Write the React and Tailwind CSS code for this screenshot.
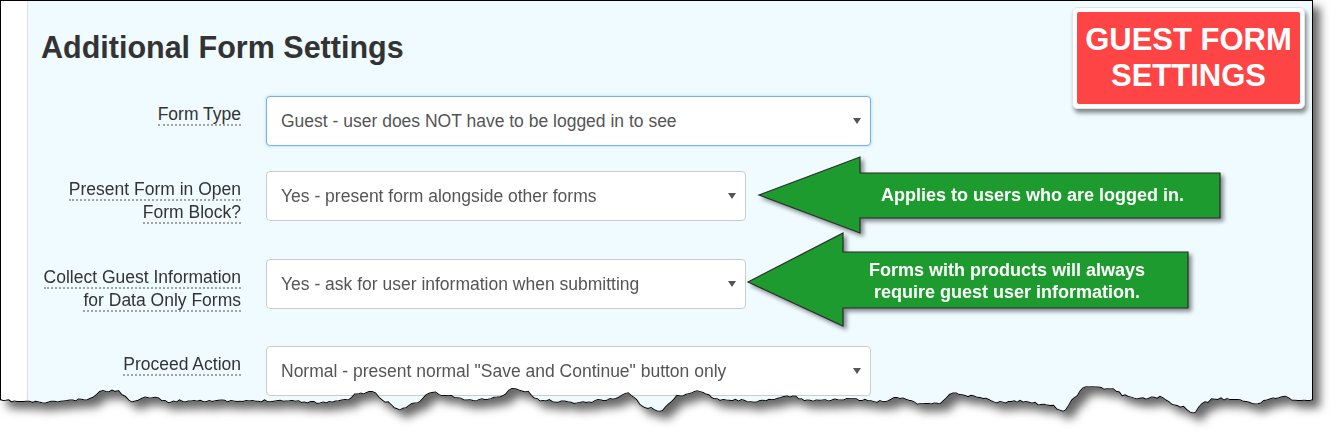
import React from 'react';

// rough outline of the torn bottom edge (x, y) in page pixels
const tearControl = [
  [0, 401], [20, 402], [45, 403], [70, 401], [90, 400], [100, 392], [115, 391], [125, 396],
  [132, 403], [145, 397], [155, 398], [165, 402], [200, 401], [240, 402], [280, 401], [320, 403],
  [345, 401], [358, 394], [372, 393], [385, 402], [400, 410], [415, 404], [432, 393], [445, 396],
  [470, 401], [500, 398], [512, 389], [525, 392], [540, 401], [580, 403], [610, 400], [628, 394],
  [645, 408], [660, 411], [680, 396], [700, 392], [720, 400], [760, 402], [790, 397], [810, 401],
  [850, 400], [880, 402], [900, 398], [920, 404], [940, 404], [953, 393], [965, 396], [980, 398],
  [1000, 403], [1020, 402], [1050, 406], [1063, 412], [1075, 398], [1083, 388], [1110, 389],
  [1125, 396], [1140, 399], [1160, 398], [1180, 407], [1193, 413], [1205, 403], [1215, 399],
  [1230, 400], [1240, 401], [1255, 404], [1270, 400], [1282, 397], [1295, 401], [1313, 400],
];

const tearPoints = (() => {
  let seed = 11;
  const rnd = () => {
    seed = (seed * 16807) % 2147483647;
    return seed / 2147483647;
  };
  const pts = [];
  for (let i = 0; i < tearControl.length - 1; i++) {
    const [x0, y0] = tearControl[i];
    const [x1, y1] = tearControl[i + 1];
    const steps = Math.max(1, Math.round((x1 - x0) / 3));
    for (let s = 0; s < steps; s++) {
      const t = s / steps;
      const k = (1 - Math.cos(Math.PI * t)) / 2;
      const x = x0 + (x1 - x0) * t;
      const y = y0 + (y1 - y0) * k + (rnd() - 0.5) * 2.2;
      pts.push([Math.round(x * 10) / 10, Math.round(y * 10) / 10]);
    }
  }
  pts.push(tearControl[tearControl.length - 1]);
  return pts;
})();

const clipPath = `polygon(0px 0px, 1313px 0px, ${[...tearPoints]
  .reverse()
  .map(([x, y]) => `${x}px ${y}px`)
  .join(', ')})`;

const tearLine = tearPoints.map(([x, y]) => `${x},${y}`).join(' ');

const Caret = () => (
  <svg width="8" height="6" viewBox="0 0 8 6" className="shrink-0">
    <path d="M0 0H8L4 6Z" fill="#555" />
  </svg>
);

const FakeSelect = ({ value, width, focused }) => (
  <div
    className={`${width} h-[50px] shrink-0 flex items-center justify-between pl-[14px] pr-[9px] bg-white rounded-[4px] border text-[17.5px] text-[#555] ${
      focused ? 'border-[#78aef0] shadow-[0_0_3px_rgba(102,175,233,0.5)]' : 'border-[#cccccc]'
    }`}
  >
    <span className="whitespace-nowrap">{value}</span>
    <Caret />
  </div>
);

const Label = ({ lines }) => (
  <div className="w-[213px] shrink-0 pt-[7px] text-right text-[17.5px] leading-[23px] text-[#333]">
    <span className="border-b-2 border-dotted border-[#a3a3a3]">
      {lines.map((line, i) => (
        <React.Fragment key={i}>
          {i > 0 && <br />}
          {line}
        </React.Fragment>
      ))}
    </span>
  </div>
);

const rows = [
  {
    label: ['Form Type'],
    value: 'Guest - user does NOT have to be logged in to see',
    width: 'w-[605px]',
    focused: true,
    height: 'h-[75px]',
  },
  {
    label: ['Present Form in Open', 'Form Block?'],
    value: 'Yes - present form alongside other forms',
    width: 'w-[480px]',
    height: 'h-[88px]',
  },
  {
    label: ['Collect Guest Information', 'for Data Only Forms'],
    value: 'Yes - ask for user information when submitting',
    width: 'w-[480px]',
    height: 'h-[87px]',
  },
  {
    label: ['Proceed Action'],
    value: 'Normal - present normal "Save and Continue" button only',
    width: 'w-[605px]',
    height: 'h-[60px]',
  },
];

const App = () => {
  return (
    <div className="relative w-[1338px] h-[444px] overflow-hidden bg-white font-['Liberation_Sans',Arial,sans-serif]">
      <div className="drop-shadow-[7px_7px_5px_rgba(0,0,0,0.6)]">
        <div
          className="relative flex w-[1313px] h-[420px] border-l border-t border-r border-black"
          style={{ clipPath }}
        >
          <div className="w-[26px] shrink-0 bg-white" />
          <div className="flex-1 border-l border-[#dddddd] bg-[#effbff]">
            <h2 className="pl-[13px] pt-[28px] text-[30.5px] leading-[36px] font-bold text-[#333]">
              Additional Form Settings
            </h2>
            <div className="mt-[31px]">
              {rows.map((row) => (
                <div key={row.value} className={`flex items-start ${row.height}`}>
                  <Label lines={row.label} />
                  <div className="ml-[25px]">
                    <FakeSelect value={row.value} width={row.width} focused={row.focused} />
                  </div>
                </div>
              ))}
            </div>
          </div>
          <svg className="pointer-events-none absolute left-[-1px] top-[-1px]" width="1313" height="420">
            <polyline points={tearLine} fill="none" stroke="#000" strokeWidth="2" />
          </svg>
        </div>
      </div>

      {/* callout badge */}
      <div className="absolute left-[1072px] top-[7px] w-[233px] h-[102px] p-[4px] bg-white rounded-[5px] border border-[#e3e3e3] shadow-[2px_4px_4px_rgba(0,0,0,0.45)]">
        <div className="w-full h-full rounded-[2px] bg-[#fe4444] flex flex-col items-center justify-center text-white font-bold text-[31px] leading-[36px]">
          <div>GUEST FORM</div>
          <div>SETTINGS</div>
        </div>
      </div>

      {/* green arrows */}
      <svg
        className="pointer-events-none absolute left-0 top-0 drop-shadow-[3px_3px_2px_rgba(0,0,0,0.45)]"
        width="1338"
        height="444"
      >
        <polygon
          points="759,195 860,157 860,173 1220,173 1220,218 860,218 860,233"
          fill="#1e9b2e"
          stroke="#2b2b2b"
          strokeWidth="1.2"
        />
        <polygon
          points="748,282 843,233 843,252 1188,252 1188,308 843,308 843,326"
          fill="#1e9b2e"
          stroke="#2b2b2b"
          strokeWidth="1.2"
        />
      </svg>
      <div className="absolute left-[881px] top-[184px] w-[300px] text-center text-white font-bold text-[18px] leading-[22px] whitespace-nowrap">
        Applies to users who are logged in.
      </div>
      <div className="absolute left-[857px] top-[259px] w-[300px] text-center text-white font-bold text-[18px] leading-[22px] whitespace-nowrap">
        <div>Forms with products will always</div>
        <div>require guest user information.</div>
      </div>
    </div>
  );
};

export default App;
